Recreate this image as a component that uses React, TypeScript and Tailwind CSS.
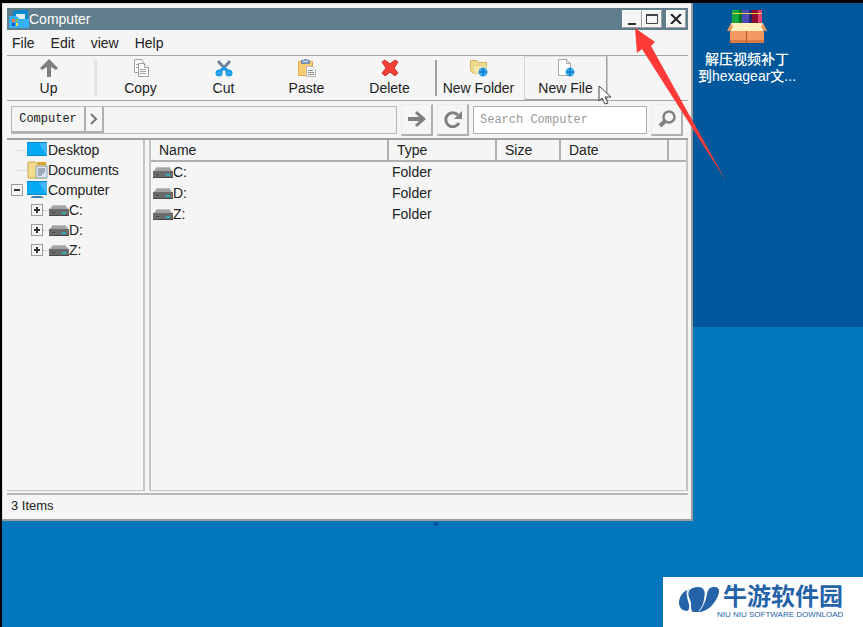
import React from 'react';

const menus = ['File', 'Edit', 'view', 'Help'];
const drives = ['C:', 'D:', 'Z:'];

const DriveIcon = () => (
    <svg width="20" height="14" viewBox="0 0 20 14" className="shrink-0">
        <path d="M4 2h12l4 5H0z" fill="#a3a3a3" />
        <path d="M5 2h10l1 1H4z" fill="#bdbdbd" />
        <path d="M0 6h20v7H0z" fill="#6b6b6b" />
        <path d="M0 12h20v1H0z" fill="#484848" />
        <path d="M13 9h4v2h-4z" fill="#2bb3b8" />
        <path d="M3 9h3v1H3z" fill="#454545" />
    </svg>
);

const ScreenIcon = ({ stand = false }: { stand?: boolean }) => (
    <svg width="21" height="18" viewBox="0 0 21 18" className="shrink-0">
        <path d="M0 1h20v14H0z" fill="#03a9f4" />
        <path d="M11 1h9v14z" fill="#42b5fb" />
        <path d="M0 1h20v1H0z" fill="#0288d1" />
        <path d="M0 14h20v1H0z" fill="#0288d1" />
        {stand && <path d="M6 16h8l3 2H3z" fill="#3c7ea5" />}
    </svg>
);

const DocumentsIcon = () => (
    <svg width="21" height="18" viewBox="0 0 21 18" className="shrink-0">
        <path d="M1 1h7l2 2h9v14H1z" fill="#f3dc8b" stroke="#c9a94f" />
        <path d="M10 1h9v3h-8z" fill="#dba532" />
        <path d="M9 5h11v12H9z" fill="#dbe4ec" stroke="#8ba0b3" />
        <path d="M11 8h7M11 10h7M11 12h6M11 14h4" stroke="#587087" />
    </svg>
);

const UpIcon = () => (
    <svg width="20" height="18" viewBox="0 0 20 18">
        <path d="M10 0 19 9l-2 2-5-3v10H8V8l-5 3-2-2z" fill="#808080" />
    </svg>
);

const CopyIcon = () => (
    <svg width="18" height="18" viewBox="0 0 18 18" fill="#fafafa" stroke="#a0a0a0">
        <path d="M2.5.5h7l2 3v10h-9z" />
        <path d="M6.5 4.5h6l4 4v9h-10z" />
        <path d="M12.5 4.5v4h4M8 10.5h6M8 12.5h6M8 14.5h6M4 5.5h2M4 8.5h2" />
    </svg>
);

const CutIcon = () => (
    <svg width="18" height="18" viewBox="0 0 18 18" fill="none">
        <path d="M3 2l9 10M15 2 6 12" stroke="#72849b" strokeWidth="3" />
        <circle cx="4" cy="14" r="2" stroke="#1e9be9" strokeWidth="3" />
        <circle cx="14" cy="14" r="2" stroke="#1e9be9" strokeWidth="3" />
        <path d="M5 12l4-3 4 3" stroke="#1e9be9" strokeWidth="3" />
    </svg>
);

const PasteIcon = () => (
    <svg width="20" height="18" viewBox="0 0 20 18">
        <path d="M1.5 2.5h14v14h-14z" fill="#f8cc70" stroke="#dfa94d" />
        <path d="M4 1h2l2-1h2l1 1h2v4H4z" fill="#7792b5" />
        <path d="M6 2h5v1H6z" fill="#e1ebf5" />
        <path d="M9.5 7.5h6l3 3v7h-9z" fill="#f7f7f7" stroke="#b7b7b7" />
        <path d="M11 11.5h5M11 13.5h6M11 15.5h6" stroke="#909090" />
    </svg>
);

const DeleteIcon = () => (
    <svg width="18" height="18" viewBox="0 0 18 18">
        <path d="M1 3l3-2 5 4 5-4 3 2-4 6 4 5-3 3-5-4-5 4-3-3 4-5z" fill="#f44336" stroke="#d32f2f" />
    </svg>
);

const PlusBadge = () => (
    <>
        <circle cx="14" cy="13" r="4.5" fill="#45acec" />
        <path d="M14 9v8M10 13h8" stroke="#1287d6" strokeWidth="2" />
    </>
);

const NewFolderIcon = () => (
    <svg width="20" height="18" viewBox="0 0 20 18">
        <path d="M1.5 1.5h6l2 2h8v11h-13l-3-3z" fill="#efdb8f" stroke="#d2b257" />
        <path d="M4.5 6.5h13v8h-13z" fill="#f6e8ac" stroke="#e4cf82" />
        <PlusBadge />
    </svg>
);

const NewFileIcon = () => (
    <svg width="20" height="18" viewBox="0 0 20 18">
        <path d="M2.5.5h8l4 4v12h-12z" fill="#fff" stroke="#a8a8a8" />
        <path d="M10.5.5v4h4" fill="none" stroke="#a8a8a8" />
        <PlusBadge />
    </svg>
);

const ToolButton = ({ icon, label, active = false }: { icon: React.ReactNode; label: string; active?: boolean }) => (
    <button
        className={`flex h-11 w-[83px] shrink-0 flex-col items-center justify-center gap-0.5 border text-sm leading-[18px] whitespace-nowrap ${
            active ? 'border-t-[#e0e0e0] border-r-[#a0a0a0] border-b-[#a0a0a0] border-l-[#d4d4d4] shadow-[1px_0_#c8c8c8]' : 'border-transparent'
        }`}
    >
        {icon}
        {label}
    </button>
);

const SquareButton = ({ children, label }: { children: React.ReactNode; label: string }) => (
    <button
        aria-label={label}
        className="flex size-8 shrink-0 items-center justify-center border border-t-[#ececec] border-r-2 border-r-[#b0b0b0] border-b-2 border-b-[#b0b0b0] border-l-[#ececec]"
    >
        {children}
    </button>
);

const CaptionButton = ({ children, label }: { children: React.ReactNode; label: string }) => (
    <button
        aria-label={label}
        className="flex h-[18px] w-5 items-center justify-center border border-white border-r-[#9e9e9e] border-b-[#9e9e9e] bg-[#f5f5f5]"
    >
        {children}
    </button>
);

const Expander = ({ open = false, label }: { open?: boolean; label: string }) => (
    <button aria-label={label} className="flex size-3 shrink-0 items-center justify-center border border-[#9a9a9a] bg-[#f5f5f5]">
        <svg width="6" height="6" viewBox="0 0 6 6" shapeRendering="crispEdges">
            <path d={open ? 'M0 2h6v2H0z' : 'M0 2h2V0h2v2h2v2H4v2H2V4H0z'} fill="#333" />
        </svg>
    </button>
);

const TitleBar = () => (
    <header className="flex h-[22px] items-center bg-[#607d8b] pr-0.5 pl-0.5 text-white">
        <svg width="20" height="18" viewBox="0 0 20 18">
            <path d="M4 1h5l1-1h9v14H4z" fill="#0288d1" />
            <path d="M7 4h9v7H7z" fill="#d9eefb" />
            <path d="M0 6h7l4 3h9v9H0z" fill="#35b0fa" />
            <path d="M3 9h3v3H3z" fill="#ee7043" />
            <path d="M7 9h2v3H7z" fill="#7ac943" />
            <path d="M3 13h3v3H3z" fill="#1755c4" />
            <path d="M7 13h2v3H7z" fill="#ffdb3b" />
        </svg>
        <h1 className="flex-1 text-sm">Computer</h1>
        <CaptionButton label="Minimize">
            <svg width="12" height="12" viewBox="0 0 12 12">
                <path d="M2 10h8v2H2z" fill="#333" />
            </svg>
        </CaptionButton>
        <CaptionButton label="Maximize">
            <svg width="14" height="12" viewBox="0 0 14 12">
                <path d="M1.5 1.5h11v9h-11z" fill="none" stroke="#444" />
                <path d="M1 1h12v2H1z" fill="#444" />
            </svg>
        </CaptionButton>
        <span className="w-1" />
        <CaptionButton label="Close">
            <svg width="12" height="10" viewBox="0 0 12 10">
                <path d="M1 0l10 10M11 0 1 10" stroke="#222" strokeWidth="2" />
            </svg>
        </CaptionButton>
    </header>
);

const Toolbar = () => (
    <div className="relative flex h-[45px] border-b border-[#a6a6a6]">
        <ToolButton icon={<UpIcon />} label="Up" />
        <span className="my-1 mr-0.5 ml-1 w-[3px] shrink-0 bg-[#e4e4e4]" />
        <ToolButton icon={<CopyIcon />} label="Copy" />
        <ToolButton icon={<CutIcon />} label="Cut" />
        <ToolButton icon={<PasteIcon />} label="Paste" />
        <ToolButton icon={<DeleteIcon />} label="Delete" />
        <span className="my-1 ml-1 w-0.5 shrink-0 bg-[#a0a0a0]" />
        <div className="flex gap-1">
            <ToolButton icon={<NewFolderIcon />} label="New Folder" />
            <ToolButton icon={<NewFileIcon />} label="New File" active />
        </div>
        {/* mouse pointer */}
        <svg width="14" height="20" viewBox="0 0 14 20" className="absolute top-[29px] left-[591px] z-10">
            <path d="M1 1v15l3-3 3 6 3-1-3-6h6z" fill="#fff" stroke="#444" />
        </svg>
    </div>
);

const AddressBar = () => (
    <div className="flex h-[39px] items-center border-b-2 border-[#a0a0a0] pr-[5px] pl-1">
        <nav className="flex h-7 flex-1 border border-[#b8b8b8] font-['Liberation_Mono',monospace] text-xs">
            <button className="w-[74px] border-r-2 border-b-2 border-[#b0b0b0]">Computer</button>
            <button aria-label="Show folders" className="flex w-[18px] items-center justify-center border-r-2 border-b-2 border-[#b0b0b0]">
                <svg width="8" height="12" viewBox="0 0 8 12">
                    <path d="M1 1l5 5-5 5" fill="none" stroke="#777" strokeWidth="2" />
                </svg>
            </button>
        </nav>
        <div className="ml-1 flex gap-1">
            <SquareButton label="Go">
                <svg width="18" height="16" viewBox="0 0 18 16">
                    <path d="M9 0l9 8-9 8-2-2 4-4H0V6h11L7 2z" fill="#808080" />
                </svg>
            </SquareButton>
            <SquareButton label="Reload">
                <svg width="18" height="18" viewBox="0 0 18 18">
                    <path d="M14 5a7 7 0 1 0 1 8" fill="none" stroke="#808080" strokeWidth="3" />
                    <path d="M18 1v8h-8z" fill="#808080" />
                </svg>
            </SquareButton>
        </div>
        <input
            aria-label="Search"
            placeholder="Search Computer"
            className="mx-1 h-7 w-[174px] border border-[#b0b0b0] bg-white px-1.5 font-['Liberation_Mono',monospace] text-xs placeholder:text-[#9a9a9a]"
        />
        <SquareButton label="Find">
            <svg width="18" height="18" viewBox="0 0 18 18" fill="none" stroke="#808080">
                <circle cx="11" cy="7" r="5.5" strokeWidth="2.5" />
                <path d="M7 11l-5 5" strokeWidth="4" />
            </svg>
        </SquareButton>
    </div>
);

const FolderTree = () => (
    <ul className="w-[138px] shrink-0 border-r-2 border-b border-[#c4c4c4] text-sm leading-5 [&_li]:flex [&_li]:h-5 [&_li]:items-center">
        <li className="pl-2.5">
            <span className="w-2.5 border-t border-dotted border-[#d0d0d0]" />
            <ScreenIcon />
            Desktop
        </li>
        <li className="pl-2.5">
            <span className="w-2.5 border-t border-dotted border-[#d0d0d0]" />
            <DocumentsIcon />
            Documents
        </li>
        <li className="gap-1 pl-1">
            <Expander open label="Collapse Computer" />
            <span className="flex">
                <ScreenIcon stand />
                Computer
            </span>
        </li>
        {drives.map((drive) => (
            <li key={drive} className="pl-6">
                <Expander label={`Expand ${drive}`} />
                <span className="w-1.5 border-t border-dotted border-[#c4c4c4]" />
                <DriveIcon />
                {drive}
            </li>
        ))}
    </ul>
);

const FileList = () => (
    <div className="flex-1 border-r-2 border-b border-l-2 border-[#c4c4c4]">
        <table className="w-full table-fixed text-left text-sm">
            <thead>
                <tr className="h-[21px] border-b-2 border-[#b0b0b0] leading-[18px] [&>th]:p-0 [&>th]:pl-2 [&>th]:font-normal">
                    <th className="w-[237px] border-r-2 border-[#b0b0b0]">Name</th>
                    <th className="w-[108px] border-r-2 border-[#b0b0b0]">Type</th>
                    <th className="w-16 border-r-2 border-[#b0b0b0]">Size</th>
                    <th className="w-[108px] border-r-2 border-[#b0b0b0]">Date</th>
                    <th aria-label="Filler" />
                </tr>
            </thead>
            <tbody>
                {drives.map((drive) => (
                    <tr key={drive} className="h-[21px] leading-5">
                        <td className="pl-0.5">
                            <span className="flex items-center">
                                <DriveIcon />
                                {drive}
                            </span>
                        </td>
                        <td className="pl-1">Folder</td>
                        <td />
                        <td />
                        <td />
                    </tr>
                ))}
            </tbody>
        </table>
    </div>
);

const ExplorerWindow = () => (
    <main className="relative mb-[106px] flex min-w-0 flex-1 flex-col border-r-2 border-b-2 border-[#9e9e9e] bg-[#f5f5f5] pt-[5px] pr-[3px] pb-0.5 pl-[5px] text-[#222] shadow-[inset_1px_1px_#dcdcdc]">
        <TitleBar />
        <nav className="flex h-[26px] items-center gap-4 border-b border-[#a6a6a6] pl-[5px] text-sm">
            {menus.map((menu) => (
                <button key={menu}>{menu}</button>
            ))}
        </nav>
        <Toolbar />
        <AddressBar />
        <div className="flex flex-1 gap-1">
            <FolderTree />
            <FileList />
        </div>
        <footer className="mt-0.5 flex h-6 items-center border-t-2 border-[#b8b8b8] pl-1 text-[13px]">3 Items</footer>

        {/* pointer arrow towards the minimize button */}
        <svg width="93" height="155" viewBox="0 0 93 155" className="absolute top-[25px] -right-[35px] z-20">
            <path d="M2 0l20 14-4 4 75 135L9 21l-5 4z" fill="#fd3a38" />
        </svg>
    </main>
);

const DesktopShortcut = () => (
    <a href="#archive" className="flex w-[108px] flex-col items-center pt-1.5 text-sm leading-[17px] font-medium text-white">
        <svg width="40" height="36" viewBox="0 0 40 36" className="mb-1.5">
            <path d="M5 1h10v14H5z" fill="#15a83c" />
            <path d="M12 1h3v14h-3z" fill="#087028" />
            <path d="M15 1h10v14H15z" fill="#4b4bb5" />
            <path d="M22 1h3v14h-3z" fill="#28286d" />
            <path d="M25 1h10v14H25z" fill="#8f0d33" />
            <path d="M31 1h4v14h-4z" fill="#e5416c" />
            <path d="M5 4h30v1H5z" fill="#e8cf45" />
            <path d="M4 14h32v9H4z" fill="#fff0bd" />
            <path d="M4 14 0 22h3l3-4z" fill="#e69b61" />
            <path d="M36 14l4 8h-3l-3-4z" fill="#e69b61" />
            <path d="M3 22h34v12H3z" fill="#f29a61" />
            <path d="M3 31h34v3H3z" fill="#de7b43" />
            <path d="M19 22h1v12h-1z" fill="#b4562d" />
        </svg>
        <span className="whitespace-nowrap">解压视频补丁</span>
        <span className="whitespace-nowrap">到hexagear文...</span>
    </a>
);

const Watermark = () => (
    <div className="absolute right-0 bottom-0 flex h-[50px] w-[200px] gap-1 bg-white pt-1.5 pl-4 text-[#2563a8]">
        <svg width="40" height="26" viewBox="0 0 40 26" className="mt-1 shrink-0">
            <path d="M10 2C4 4 0 10 0 16c0 5 4 8 8 8 3-1 3-3 2-7C8 11 7 7 10 2z" fill="#2563a8" />
            <path d="M10 4c2-3 5-4 9-4 5 0 7 3 7 9l-1 8c3-5 2-11 5-15 2-2 4-2 6-2 4 0 5 4 3 9-4 9-11 16-20 16h-5c-2-1-2-5-2-9-1-5-4-7-2-12z" fill="#2563a8" />
            <path d="M9 2c-3 6 2 9 2 15 0 4-1 6-2 8M29 1c-3 4-3 9-4 14-1 4-3 7-5 9" fill="none" stroke="#fff" />
        </svg>
        <div className="flex flex-col">
            <span className="text-2xl leading-7 font-bold whitespace-nowrap">牛游软件园</span>
            <span className="-ml-1.5 text-[8px] leading-[8px] whitespace-nowrap">NIU NIU SOFTWARE DOWNLOAD</span>
        </div>
    </div>
);

const App: React.FC = () => {
    return (
        <div className="relative flex min-h-screen border-t-3 border-l-2 border-black bg-[linear-gradient(#01579b_324px,#0277bd_324px)] font-['Liberation_Sans','Noto_Sans_CJK_SC',sans-serif]">
            <ExplorerWindow />
            <aside className="w-[170px] shrink-0">
                <DesktopShortcut />
            </aside>
            {/* speck of the wallpaper logo that shows below the window */}
            <span className="absolute bottom-[101px] left-1/2 h-1 w-1.5 rounded-full bg-[#01579b]" />
            <Watermark />
        </div>
    );
};

export default App;
